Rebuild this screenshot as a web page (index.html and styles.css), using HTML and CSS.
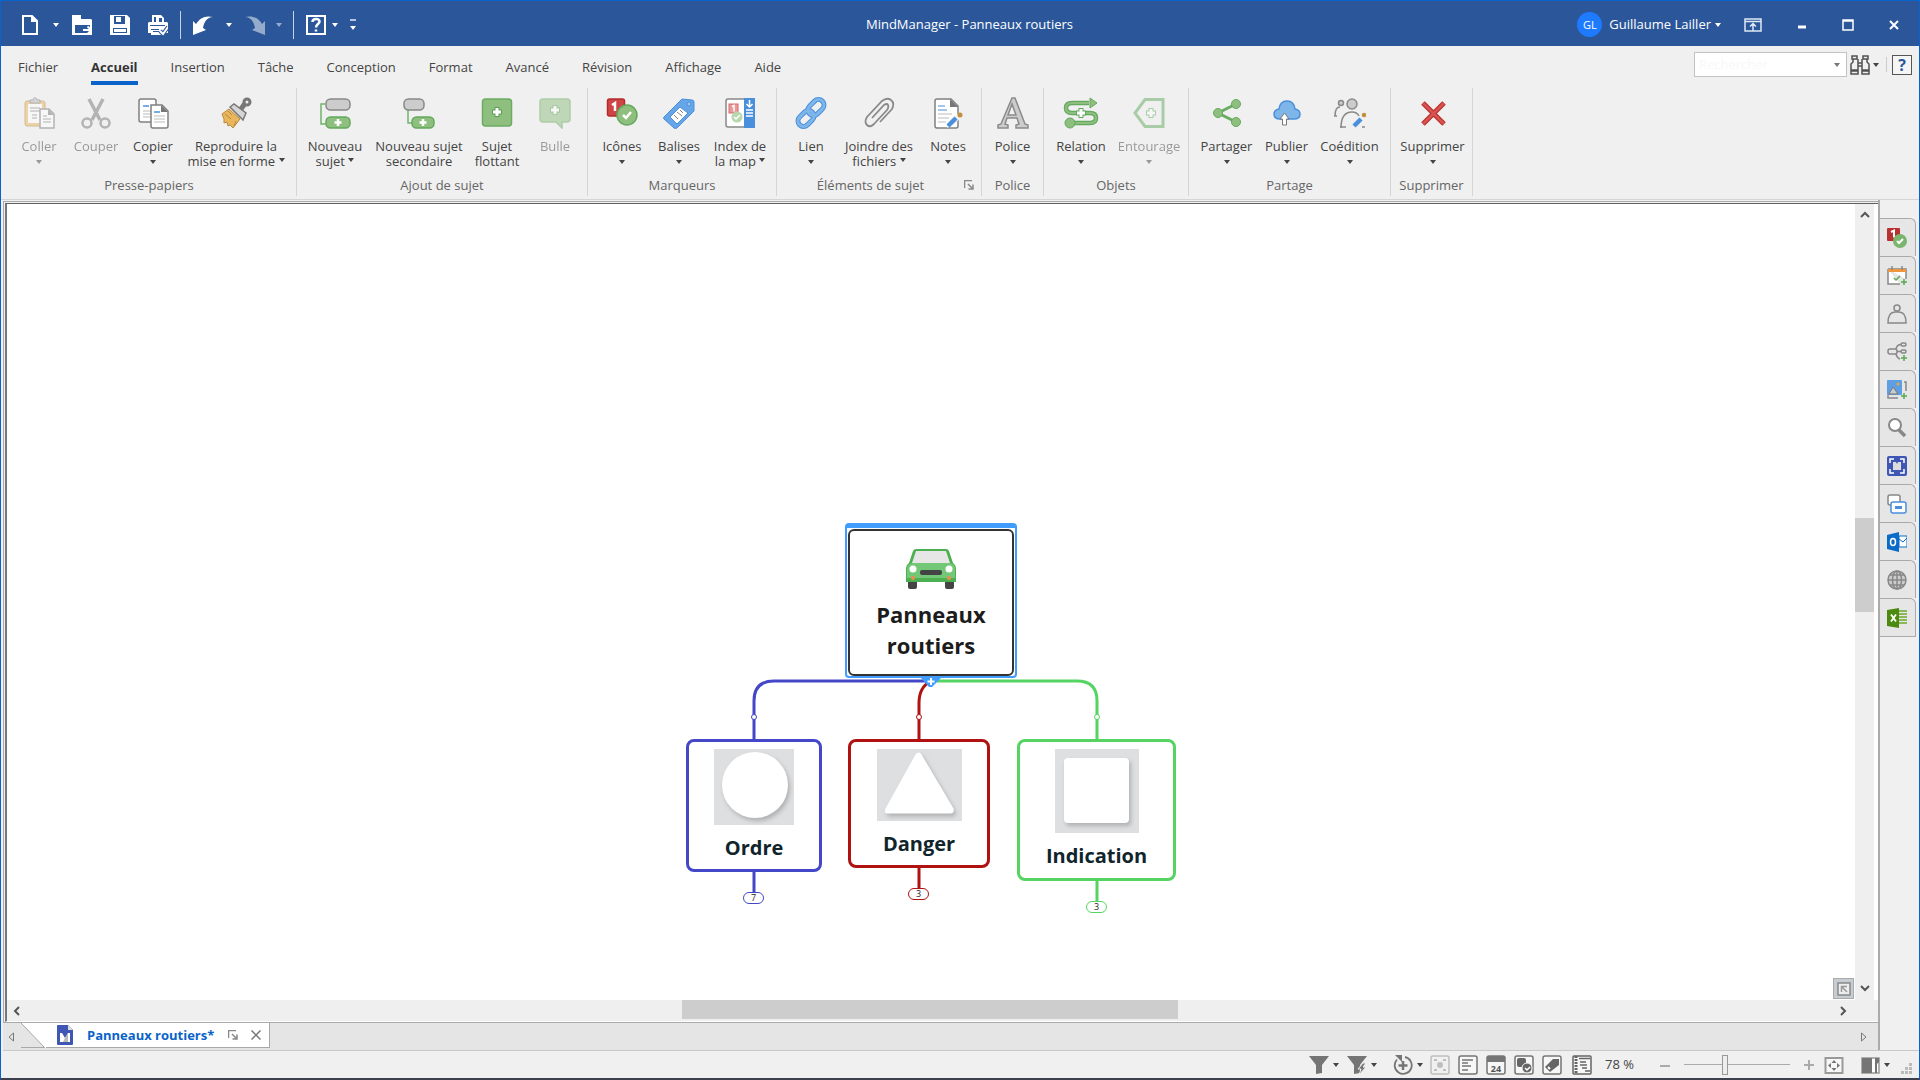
FILE: index.html
```html
<!DOCTYPE html>
<html lang="fr">
<head>
<meta charset="utf-8">
<title>MindManager - Panneaux routiers</title>
<link rel="stylesheet" href="styles.css">
</head>
<body>
<div class="window">
<header class="titlebar">
  <div class="quick">
    <button class="qbtn" aria-label="Nouveau"><svg width="20" height="22" viewBox="0 0 20 22"><path d="M3 2h9l5 5v13H3z" fill="none" stroke="#fff" stroke-width="2"/><path d="M11 1v7h7z" fill="#fff"/></svg></button>
    <button class="drop" aria-label="Options de nouveau"><i class="caret"></i></button>
    <button class="qbtn" aria-label="Ouvrir"><svg width="20" height="22" viewBox="0 0 20 22"><path d="M0 1h9v4h10l1 1v15H0z" fill="#fff"/><path d="M3 11h15v8H3z" fill="#2b579a"/><path d="M11 16h8M15.500 12.500l4 3.500-4 4" fill="none" stroke="#fff" stroke-width="2"/></svg></button>
    <button class="qbtn" aria-label="Enregistrer"><svg width="20" height="22" viewBox="0 0 20 22"><path d="M0 1h17l3 3v17H0z" fill="#fff"/><path d="M4 2h11v8H4zM3 14h14v5H3z" fill="#2b579a"/><path d="M6 3h5v5H6zM4 15h12v4H4z" fill="#fff"/><path d="M4 18.500h12" stroke="#2b579a"/></svg></button>
    <button class="qbtn" aria-label="Imprimer"><svg width="20" height="22" viewBox="0 0 20 22"><path d="M4 8V1h9l3 3v4h3l1 1v10H0V9l1-1z" fill="#fff"/><path d="M6 3h2v5H6zM11 4h3v4h-3zM2 11h15v1H2zM3 15h8v1H3zM5 18h6v1H5z" fill="#2b579a"/><path d="M3 16h11v5H3z" fill="#fff"/><path d="M5 17.500h6" stroke="#2b579a"/><path d="M12 17l3 3 5-7" fill="none" stroke="#2b579a" stroke-width="4"/><path d="M12 17l3 3 5-7" fill="none" stroke="#fff" stroke-width="2"/></svg></button>
    <span class="qsep"></span>
    <button class="qbtn" aria-label="Annuler"><svg width="20" height="22" viewBox="0 0 20 22"><path d="M0 7l3 3C7 4 12 1 20 3c-6 0-9 5-10 11l3 2-13 5z" fill="#fff"/></svg></button>
    <button class="drop" aria-label="Historique d'annulation"><i class="caret"></i></button>
    <button class="qbtn dim" aria-label="Rétablir"><svg width="20" height="22" viewBox="0 0 20 22"><path d="M20 7l-3 3C13 4 8 1 0 3c6 0 9 5 10 11l-3 2 13 5z" fill="#fff"/></svg></button>
    <button class="drop dim" aria-label="Historique de rétablissement"><i class="caret"></i></button>
    <span class="qsep"></span>
    <button class="qbtn" aria-label="Aide"><svg width="20" height="22" viewBox="0 0 20 22"><rect x="1" y="2" width="18" height="18" fill="none" stroke="#fff" stroke-width="2"/><path d="M6.500 8c0-4 7-4 7-.5 0 2.500-3.500 2.500-3.500 6M10 15.500v2" fill="none" stroke="#fff" stroke-width="2.500"/></svg></button>
    <button class="drop tight" aria-label="Options d'aide"><i class="caret"></i></button>
    <button class="drop tight" aria-label="Personnaliser la barre"><span class="custom"><i class="caret"></i></span></button>
  </div>
  <h1 class="title">MindManager - Panneaux routiers</h1>
  <div class="account">
    <span class="avatar">GL</span>
    <button class="user">Guillaume Lailler <i class="caret"></i></button>
    <button class="wbtn" aria-label="Options du ruban"><svg width="18" height="14" viewBox="0 0 18 14"><path d="M1 1h16v12H1zM1 3.500h16M9 13V6M6 8.500l3-3 3 3" fill="none" stroke="#dfe7f3" stroke-width="1.500"/></svg></button>
    <button class="wbtn" aria-label="Réduire"><svg width="12" height="12" viewBox="0 0 12 12"><path d="M2 8h8" stroke="#fff" stroke-width="3"/></svg></button>
    <button class="wbtn" aria-label="Agrandir"><svg width="12" height="12" viewBox="0 0 12 12"><path d="M1 1h10v10H1zM1 2h10" fill="none" stroke="#fff" stroke-width="1.500"/></svg></button>
    <button class="wbtn" aria-label="Fermer"><svg width="12" height="12" viewBox="0 0 12 12"><path d="M2 2l8 8M10 2l-8 8" stroke="#fff" stroke-width="2"/></svg></button>
  </div>
</header>

<div class="tabrow">
  <nav class="tabs">
    <a href="#">Fichier</a><a href="#" class="on">Accueil</a><a href="#">Insertion</a><a href="#">Tâche</a><a href="#">Conception</a><a href="#">Format</a><a href="#">Avancé</a><a href="#">Révision</a><a href="#">Affichage</a><a href="#">Aide</a>
  </nav>
  <div class="search">
    <div class="combo"><input type="text" placeholder="Rechercher" aria-label="Rechercher"><button aria-label="Recherches récentes"><i class="caret"></i></button></div>
    <button class="find" aria-label="Lancer la recherche"><svg width="20" height="20" viewBox="0 0 20 20" fill="none" stroke="#505050" stroke-width="1.500"><path d="M2 1h5v3H2zM13 1h5v3h-5zM3 4v3L1 9v6h7V4M17 4v3l2 2v6h-7V4M8 8h4M8 11h4M1 16h7v3H1zM12 16h7v3h-7z"/></svg><i class="caret"></i></button>
    <span class="ssep"></span>
    <button class="help" aria-label="Aide">?</button>
  </div>
</div>

<div class="ribbon">
  <section class="group g1">
    <div class="items">
      <button class="rb w58 off"><svg viewBox="0 0 32 32"><rect x="2" y="4" width="20" height="25" rx="2" fill="#e9b65e" stroke="#b98a3c"/><rect x="5" y="7" width="14" height="19" fill="#fff"/><path d="M7 6V3h3c0-3 4-3 4 0h3v3z" fill="#bbb" stroke="#777"/><path d="M7 11h10M7 14h10M9 18h5M9 21h5" stroke="#777"/><path d="M17 12h9l5 5v14H17z" fill="#fff" stroke="#777" stroke-width="1.500"/><path d="M25 12v6h6z" fill="#777"/><path d="M20 19h4M20 22h8M20 25h8" stroke="#777"/></svg><span>Coller</span><i class="caret"></i></button>
      <button class="rb w56 off"><svg viewBox="0 0 32 32" fill="none" stroke="#777"><path d="M9 2l11 21M23 2L12 23" stroke-width="3.500"/><circle cx="7" cy="26" r="4.500" stroke-width="2.500"/><circle cx="25" cy="26" r="4.500" stroke-width="2.500"/></svg><span>Couper</span></button>
      <button class="rb w58"><svg viewBox="0 0 32 32"><rect x="2" y="2" width="17" height="23" rx="2" fill="#fff" stroke="#808080" stroke-width="1.500"/><path d="M6 9h6" stroke="#4a8fdc" stroke-width="1.500"/><path d="M6 14h8M6 17h8M6 20h8" stroke="#bbb"/><path d="M14 8h11l6 6v15q0 2-2 2H16q-2 0-2-2z" fill="#fff" stroke="#808080" stroke-width="1.500"/><path d="M24 8v7h7z" fill="#777"/><path d="M17 15h6" stroke="#4a8fdc" stroke-width="1.500"/><path d="M17 19h11M17 22h11M17 25h11" stroke="#bbb"/></svg><span>Copier</span><i class="caret"></i></button>
      <button class="rb w108"><svg viewBox="0 0 32 32"><path d="M21 12l5-7" stroke="#777" stroke-width="5"/><circle cx="27" cy="5" r="3" fill="#f0f0f0" stroke="#777" stroke-width="3"/><path d="M2 17l7-5 11 10-7 9-3-3-2 1-1-4-3 1 0-4z" fill="#e9b65e" stroke="#b98a3c"/><path d="M8 14l4 4M5 17l6 5M14 29l2-5" stroke="#b98a3c"/><path d="M10 10l4-3 12 9-3 7z" fill="#d5d5d5" stroke="#777" stroke-width="1.500"/></svg><span>Reproduire la<br>mise en forme <i class="caret"></i></span></button>
    </div>
    <h2>Presse-papiers</h2>
  </section>
  <section class="group g2">
    <div class="items">
      <button class="rb w68"><svg viewBox="0 0 32 32"><path d="M6 7H2v20h5" fill="none" stroke="#6fb46a" stroke-width="1.500"/><rect x="7" y="2" width="24" height="11" rx="4.500" fill="#ccc" stroke="#888" stroke-width="1.500"/><rect x="7" y="20" width="24" height="11" rx="4.500" fill="#8fbf7f" stroke="#63a95e" stroke-width="1.500"/><path d="M19 22v7M15.500 25.500h7" stroke="#fff" stroke-width="2.500"/></svg><span>Nouveau<br>sujet <i class="caret"></i></span></button>
      <button class="rb w100"><svg viewBox="0 0 32 32"><path d="M5 13v13h6" fill="none" stroke="#6fb46a" stroke-width="1.500"/><rect x="1" y="2" width="20" height="11" rx="4.500" fill="#ccc" stroke="#888" stroke-width="1.500"/><rect x="9" y="20" width="22" height="11" rx="4.500" fill="#8fbf7f" stroke="#63a95e" stroke-width="1.500"/><path d="M20 22v7M16.500 25.500h7" stroke="#fff" stroke-width="2.500"/></svg><span>Nouveau sujet<br>secondaire</span></button>
      <button class="rb w56"><svg viewBox="0 0 32 32"><rect x="1.500" y="2" width="29" height="27" rx="3" fill="#8fbf7f" stroke="#6bac62" stroke-width="1.500"/><path d="M16 10v10M11 15h10" stroke="#5e9f58" stroke-width="5"/><path d="M16 11v8M12 15h8" stroke="#fff" stroke-width="3"/></svg><span>Sujet<br>flottant</span></button>
      <button class="rb w60 off"><svg viewBox="0 0 32 32"><path d="M4 2h24q3 0 3 3v17q0 3-3 3h-5v6l-6-6H4q-3 0-3-3V5q0-3 3-3z" fill="#8fbf7f" stroke="#6bac62" stroke-width="1.500"/><path d="M16 8v10M11 13h10" stroke="#5e9f58" stroke-width="5"/><path d="M16 9v8M12 13h8" stroke="#fff" stroke-width="3"/></svg><span>Bulle</span></button>
    </div>
    <h2>Ajout de sujet</h2>
  </section>
  <section class="group g3">
    <div class="items">
      <button class="rb w56"><svg viewBox="0 0 32 32"><rect x="1.500" y="2" width="17" height="17" rx="2" fill="#cf4444" stroke="#b32c2c" stroke-width="1.500"/><path d="M6 8l3-2v8" fill="none" stroke="#fff" stroke-width="2.500"/><circle cx="21" cy="18" r="10" fill="#8fbf7f" stroke="#63a95e" stroke-width="1.500"/><path d="M17 18l3 3 5-6" fill="none" stroke="#fff" stroke-width="2.500"/></svg><span>Icônes</span><i class="caret"></i></button>
      <button class="rb w58"><svg viewBox="0 0 32 32"><path d="M1 20L19 2l10 1q2 0 2 2l0 9L14 31q-2 1-3 0L1 22q-1-1 0-2z" fill="#66a6e8" stroke="#4a8fdc"/><path d="M7 20l10-10 8 6-11 11z" fill="#fff" stroke="#4a8fdc"/><path d="M11 18l4 4M14 15l5 4M17 13l3 3" stroke="#888"/><circle cx="26" cy="7" r="2" fill="#9cc8f2" stroke="#4a8fdc"/></svg><span>Balises</span><i class="caret"></i></button>
      <button class="rb w64"><svg viewBox="0 0 32 32"><rect x="2" y="2" width="20" height="28" rx="2" fill="#fff" stroke="#888" stroke-width="1.500"/><path d="M20 1h11v30H20z" fill="#4a8fdc"/><path d="M25.500 3v6M22.500 7l3 3 3-3M22 13h7M22 16h7M22 19h7" fill="none" stroke="#fff" stroke-width="1.500"/><rect x="5" y="7" width="9" height="9" fill="#e99a9a" stroke="#d66"/><path d="M8 9.500l2-1v6" fill="none" stroke="#fff" stroke-width="1.500"/><circle cx="13" cy="20" r="5.500" fill="#b7d6ad"/><path d="M10 20l2 2 4-4" fill="none" stroke="#fff" stroke-width="1.500"/></svg><span>Index de<br>la map <i class="caret"></i></span></button>
    </div>
    <h2>Marqueurs</h2>
  </section>
  <section class="group g4">
    <div class="items">
      <button class="rb w52"><svg viewBox="0 0 32 32"><g fill="none" stroke="#4a8fdc" stroke-width="5"><rect x="12" y="5" width="18" height="11" rx="5.500" transform="rotate(-45 21 10.500)"/><rect x="2" y="16" width="18" height="11" rx="5.500" transform="rotate(-45 11 21.500)"/></g><g fill="none" stroke="#7fb6ea" stroke-width="3"><rect x="12" y="5" width="18" height="11" rx="5.500" transform="rotate(-45 21 10.500)"/><rect x="2" y="16" width="18" height="11" rx="5.500" transform="rotate(-45 11 21.500)"/></g></svg><span>Lien</span><i class="caret"></i></button>
      <button class="rb w84"><svg viewBox="0 0 32 32" fill="none" stroke="#8a8a8a" stroke-width="1.800"><path d="M9 21L21 8q3-2 4 0t-1 5L11 27q-4 4-7 1t0-8L19 4q5-4 9-1t1 9L17 25"/></svg><span>Joindre des<br>fichiers <i class="caret"></i></span></button>
      <button class="rb w54"><svg viewBox="0 0 32 32"><path d="M5 2h14l7 7v20q0 2-2 2H5q-2 0-2-2V4q0-2 2-2z" fill="#fff" stroke="#808080" stroke-width="1.500"/><path d="M18 2v8h8z" fill="#777"/><path d="M6 9h7M6 13h9" stroke="#4a8fdc"/><path d="M6 17h14M6 21h11M6 25h8" stroke="#bbb"/><path d="M15 31l2-7 11-9 3 4-10 9z" fill="#f0f0f0"/><path d="M16 29l8-8" stroke="#4a8fdc" stroke-width="4.500"/><circle cx="28" cy="18" r="2.500" fill="#c0903c"/></svg><span>Notes</span><i class="caret"></i></button>
    </div>
    <div class="foot"><h2>Éléments de sujet</h2><button class="launch" aria-label="Plus d'options"><svg width="10" height="10" viewBox="0 0 10 10"><path d="M.5 8V.500H8M4 4l4 4M9 4.500V9H4.500" fill="none" stroke="#888" stroke-width="1.500"/></svg></button></div>
  </section>
  <section class="group g5">
    <div class="items">
      <button class="rb w60"><svg viewBox="0 0 32 32"><path d="M15 1h3l10 26 3 1v3H19v-3l3-1-2-6H10l-2 6 3 1v3H1v-3l3-1zM15 7l-4 11h8z" fill="#ccc" stroke="#8a8a8a" stroke-width="1.500"/></svg><span>Police</span><i class="caret"></i></button>
    </div>
    <h2>Police</h2>
  </section>
  <section class="group g6">
    <div class="items">
      <button class="rb w66"><svg viewBox="0 0 36 32"><path d="M26 6H9q-6 0-6 5t6 5h18q6 0 6 5t-6 5H8" fill="none" stroke="#63a95e" stroke-width="4.500"/><path d="M26 6H9q-6 0-6 5t6 5h18q6 0 6 5t-6 5H8" fill="none" stroke="#8fbf7f" stroke-width="2"/><path d="M27 1l7 5-7 5z" fill="#8fbf7f" stroke="#63a95e"/><circle cx="7" cy="26" r="5" fill="#8fbf7f" stroke="#63a95e"/><path d="M18 11v10M13 16h10" stroke="#63a95e" stroke-width="5"/><path d="M18 12v8M14 16h8" stroke="#fff" stroke-width="3"/></svg><span>Relation</span><i class="caret"></i></button>
      <button class="rb w70 off"><svg viewBox="0 0 32 32"><path d="M12 2.500h18v27H12L2 16z" fill="none" stroke="#63a95e" stroke-width="3"/><path d="M18 11v10M13 16h10" stroke="#63a95e" stroke-width="5"/><path d="M18 12v8M14 16h8" stroke="#fff" stroke-width="3"/></svg><span>Entourage</span><i class="caret"></i></button>
    </div>
    <h2>Objets</h2>
  </section>
  <section class="group g7">
    <div class="items">
      <button class="rb w60"><svg viewBox="0 0 32 32"><path d="M25 7L7 16l18 9" fill="none" stroke="#6bac62" stroke-width="3"/><g fill="#8fbf7f" stroke="#63a95e"><circle cx="25" cy="7" r="4.500"/><circle cx="7" cy="16" r="4.500"/><circle cx="25" cy="25" r="4.500"/></g></svg><span>Partager</span><i class="caret"></i></button>
      <button class="rb w60"><svg viewBox="0 0 32 32"><path d="M9 22q-6 0-6-5 0-4 5-5 1-8 8-8t8 8q5 1 5 5 0 5-6 5z" fill="#7fb6ea" stroke="#4a8fdc" stroke-width="1.500"/><path d="M11.500 28v-6H9l4.500-6 4.500 6h-2.500v6z" fill="#fff" stroke="#777"/></svg><span>Publier</span><i class="caret"></i></button>
      <button class="rb w66"><svg viewBox="0 0 32 32" fill="none" stroke="#8a8a8a" stroke-width="1.500"><circle cx="7" cy="6" r="2.500" fill="#ccc"/><path d="M1 19q0-9 5-9M0 19h3"/><circle cx="18" cy="7" r="5" fill="#ccc"/><path d="M7 31q0-16 11-16 5 0 7 4M6 30h6"/><path d="M20 29l7-7" stroke="#4a8fdc" stroke-width="4.500"/><circle cx="30" cy="18" r="1.500" stroke="#c0903c" fill="#c0903c"/><path d="M28 30h3"/></svg><span>Coédition</span><i class="caret"></i></button>
    </div>
    <h2>Partage</h2>
  </section>
  <section class="group g8">
    <div class="items">
      <button class="rb w78"><svg viewBox="0 0 32 32"><path d="M6 6l21 21M27 6L6 27" stroke="#b83030" stroke-width="5"/><path d="M6 6l21 21M27 6L6 27" stroke="#d9534f" stroke-width="2.500"/></svg><span>Supprimer</span><i class="caret"></i></button>
    </div>
    <h2>Supprimer</h2>
  </section>
</div>

<div class="work">
  <main class="doc">
    <div class="frame">
      <div class="view">
        <div class="canvas">
          <div class="map">
            <svg class="links" width="490" height="400" viewBox="0 0 490 400" fill="none" stroke-width="3">
              <g stroke="#4448c8"><path d="M245 158H88q-20 0-20 20v38M68 345v25"/></g>
              <g stroke="#55d463"><path d="M245 158h146q20 0 20 20v38M411 350v28"/></g>
              <g stroke="#b01212"><path d="M245 158q-12 6-12 22v36M233 340v25"/></g>
              <g fill="#fff" stroke-width="1"><circle cx="68" cy="194" r="2.500" stroke="#4448c8"/><circle cx="233" cy="194" r="2.500" stroke="#b01212"/><circle cx="411" cy="194" r="2.500" stroke="#55d463"/></g>
            </svg>
            <div class="root"><div class="rootbox">
              <svg width="52" height="42" viewBox="0 0 52 42"><path d="M3 33h9v6q0 2-2 2H5q-2 0-2-2zM40 33h9v6q0 2-2 2h-5q-2 0-2-2z" fill="#444"/><path d="M11 1h30q2 0 3 2l4 12q3 2 3 6v13H1V21q0-4 3-6L8 3q1-2 3-2z" fill="#4caf50"/><path d="M11 3h30l4 12H7z" fill="#e6e6e6"/><path d="M7 15h38q5 1 5 6v9H2v-9q0-5 5-6z" fill="#73c877"/><circle cx="8" cy="21" r="3.500" fill="#fff"/><circle cx="44" cy="21" r="3.500" fill="#fff"/><rect x="15" y="22" width="22" height="5" rx="2" fill="#444"/><circle cx="8" cy="30" r="2" fill="#f58a4c"/><circle cx="44" cy="30" r="2" fill="#f58a4c"/></svg>
              <strong>Panneaux<br>routiers</strong></div>
            </div>
            <svg class="plus" width="22" height="11" viewBox="0 0 22 11"><path d="M0 0h22L12 10h-3z" fill="#409cff"/><path d="M11 1v7M7.500 4.500h7" stroke="#fff" stroke-width="2"/></svg>
            <div class="node ordre"><svg width="80" height="76" viewBox="0 0 80 76"><path d="M0 0h80v76H0z" fill="#dedfe1"/><circle class="sign" cx="41" cy="36" r="33"/></svg><strong>Ordre</strong></div>
            <div class="node danger"><svg width="85" height="72" viewBox="0 0 85 72"><path d="M0 0h85v72H0z" fill="#dedfe1"/><path class="sign" d="M38.500 5.500q3-4 6 0l32 54q1 5-3 5h-63q-4 0-2-5z"/></svg><strong>Danger</strong></div>
            <div class="node indic"><svg width="84" height="84" viewBox="0 0 84 84"><path d="M0 0h84v84H0z" fill="#dedfe1"/><rect class="sign" x="9" y="9" width="65" height="65" rx="4"/></svg><strong>Indication</strong></div>
            <button class="pill p1"><span>7</span></button><button class="pill p2"><span>3</span></button><button class="pill p3"><span>3</span></button>
          </div>
          <button class="corner" aria-label="Vue d'ensemble"><svg width="14" height="14" viewBox="0 0 14 14"><path d="M1 1h12v12H1z" fill="#eee" stroke="#888" stroke-width="1.500"/><path d="M4.500 10V4.500H10M5 5l5 5" fill="none" stroke="#999" stroke-width="1.500"/></svg></button>
        </div>
        <div class="vbar">
          <svg width="12" height="12" viewBox="0 0 12 12"><path d="M2 8l4-4 4 4" fill="none" stroke="#555" stroke-width="2"/></svg>
          <div class="vtrack"><div class="vthumb"></div></div>
          <svg width="12" height="12" viewBox="0 0 12 12"><path d="M2 4l4 4 4-4" fill="none" stroke="#555" stroke-width="2"/></svg>
        </div>
      </div>
      <div class="hbar">
        <svg width="12" height="12" viewBox="0 0 12 12"><path d="M8 2L4 6l4 4" fill="none" stroke="#555" stroke-width="2"/></svg>
        <div class="htrack"><div class="hthumb"></div></div>
        <svg width="12" height="12" viewBox="0 0 12 12"><path d="M4 2l4 4-4 4" fill="none" stroke="#555" stroke-width="2"/></svg>
      </div>
    </div>
    <div class="doctabs">
      <button class="nav" aria-label="Onglet précédent"><svg width="8" height="10" viewBox="0 0 8 10"><path d="M6.500 1v8L2 5z" fill="none" stroke="#777"/></svg></button>
      <div class="dtab">
        <svg class="slant" width="25" height="26" viewBox="0 0 25 26"><path d="M0 0l24 25h1V0z" fill="#fff"/><path d="M0 0l24 25" stroke="#a8a8a8" fill="none"/></svg>
        <svg width="16" height="20" viewBox="0 0 16 20"><path d="M0 1q0-1 1-1h10l5 5v14q0 1-1 1H1q-1 0-1-1z" fill="#3f56b5"/><path d="M11 0v5h5z" fill="#ddd"/><path d="M3 8h2l3 5 3-5h2v9H3z" fill="#fff"/><path d="M8 13l3-5v9H6z" fill="#b9b9b9"/></svg>
        <a href="#">Panneaux routiers*</a>
        <button class="tico" aria-label="Détacher"><svg width="10" height="10" viewBox="0 0 10 10"><path d="M.5 8V.500H8M4 4l4 4M9 4.500V9H4.500" fill="none" stroke="#888" stroke-width="1.500"/></svg></button>
        <button class="tico" aria-label="Fermer"><svg width="10" height="10" viewBox="0 0 10 10"><path d="M.5 .5l9 9M9.500 .5l-9 9" stroke="#777" stroke-width="1.500"/></svg></button>
      </div>
      <button class="nav end" aria-label="Onglet suivant"><svg width="8" height="10" viewBox="0 0 8 10"><path d="M1.500 1v8L6 5z" fill="none" stroke="#777"/></svg></button>
    </div>
  </main>
  <aside class="side">
    <button aria-label="Marqueurs"><svg viewBox="0 0 20 20"><rect width="13" height="13" rx="1" fill="#b83030"/><path d="M4 4l3-1.500v7" fill="none" stroke="#fff" stroke-width="2"/><circle cx="13" cy="13" r="7" fill="#7ab56e"/><path d="M10 13l2 2 4-4" fill="none" stroke="#fff" stroke-width="2"/></svg></button>
    <button aria-label="Tâches"><svg viewBox="0 0 20 20"><path d="M1 3h18v10M13 18H1V3" fill="#fff" stroke="#888" stroke-width="1.500"/><path d="M1 3h18v3H1z" fill="#f0963c"/><path d="M5 0v4M15 0v4" stroke="#888" stroke-width="1.500"/><path d="M7 12l2 2 4-4M17 13v6M14 16h6" fill="none" stroke="#5aa852" stroke-width="1.500"/></svg></button>
    <button aria-label="Ressources"><svg viewBox="0 0 20 20" fill="none" stroke="#888" stroke-width="1.500"><circle cx="10" cy="4" r="3"/><path d="M1 19q0-11 7-11h4q7 0 7 11z"/></svg></button>
    <button aria-label="Parties de map"><svg viewBox="0 0 20 20" fill="none" stroke="#888" stroke-width="1.500"><rect x="1" y="7" width="9" height="5" rx="2"/><path d="M10 9.500h4M9 7q1-4.500 5-4.500M9 12q1 4 4 5"/><rect x="14" y="1" width="5" height="3" rx="1.500"/><rect x="14" y="8" width="5" height="3" rx="1.500"/><path d="M17 13v6M14 16h6" stroke="#5aa852"/></svg></button>
    <button aria-label="Bibliothèque"><svg viewBox="0 0 20 20"><path d="M1 15v3h10M17 2h2v9" fill="none" stroke="#888" stroke-width="1.500"/><rect x="0" y="0" width="15" height="15" rx="1" fill="#5d9fe2"/><path d="M2 14l4-7 5 7z" fill="#ccc" stroke="#777"/><circle cx="11" cy="4" r="1.500" fill="#e5a93c"/><path d="M17 13v6M14 16h6" stroke="#5aa852" stroke-width="1.500"/></svg></button>
    <button aria-label="Rechercher"><svg viewBox="0 0 20 20"><circle cx="8" cy="7" r="6" fill="#fff" stroke="#888" stroke-width="2"/><path d="M12 12l6 6" stroke="#888" stroke-width="3.500"/></svg></button>
    <button aria-label="Capture"><svg viewBox="0 0 20 20"><rect width="20" height="20" rx="2" fill="#3f56b5"/><path d="M3 7V3h4M13 3h4v4M17 13v4h-4M7 17H3v-4" fill="none" stroke="#fff" stroke-width="1.500"/><path d="M6 6h3l1 2 1-2h3v8H6z" fill="#ddd"/></svg></button>
    <button aria-label="Fenêtres"><svg viewBox="0 0 20 20"><rect x="1" y="1" width="12" height="10" rx="2" fill="#fff" stroke="#888" stroke-width="1.500"/><rect x="4" y="8" width="15" height="11" rx="2" fill="#fff" stroke="#4a8fdc" stroke-width="1.500"/><path d="M8 13.500h7" stroke="#4a8fdc" stroke-width="3"/></svg></button>
    <button aria-label="Outlook"><svg viewBox="0 0 20 20"><path d="M12 4h8v11h-8z" fill="#fff" stroke="#0a6cc8"/><path d="M12 7l4 3 4-4" fill="none" stroke="#0a6cc8"/><path d="M0 3l12-3v20L0 17z" fill="#0a6cc8"/><ellipse cx="6" cy="10" rx="2.500" ry="3.500" fill="none" stroke="#fff" stroke-width="1.500"/></svg></button>
    <button aria-label="Web"><svg viewBox="0 0 20 20" fill="#ccc" stroke="#888" stroke-width="1.500"><circle cx="10" cy="10" r="9"/><path d="M10 1v18M1 10h18M3 5h14M3 15h14"/><ellipse cx="10" cy="10" rx="4.500" ry="9" fill="none"/></svg></button>
    <button aria-label="Excel"><svg viewBox="0 0 20 20"><path d="M12 3h8M12 6h8M12 9h8M12 12h8M12 15h8" stroke="#8db85a" stroke-width="2"/><path d="M0 2l12-2v20L0 18z" fill="#4c8a10"/><path d="M4 6.500l5 7M9 6.500l-5 7" stroke="#fff" stroke-width="1.800"/></svg></button>
  </aside>
</div>

<footer class="status">
  <button class="sb" aria-label="Filtre"><svg viewBox="0 0 20 20"><path d="M0 1h20l-7 9v8l-6 1v-9z" fill="#757575"/></svg></button><i class="caret"></i>
  <button class="sb g10" aria-label="Filtre rapide"><svg viewBox="0 0 20 20"><path d="M0 1h20l-7 9v8l-6 1v-9z" fill="#757575"/><path d="M16 8l-5 6h3l-2 6 7-8h-3l3-4z" fill="#757575" stroke="#f0f0f0"/></svg></button><i class="caret"></i>
  <button class="sb g15" aria-label="Détail"><svg viewBox="0 0 20 20" fill="none" stroke="#757575"><path d="M12 2a8.500 8.500 0 1 1-8 2.500" stroke-width="1.800"/><path d="M2 0h7v7z" fill="#757575" stroke="none"/><path d="M10 6v9M5.500 10.500h9" stroke-width="2.500"/></svg></button><i class="caret"></i>
  <button class="sb pale" aria-label="Map"><svg viewBox="0 0 20 20"><rect x="1" y="1" width="18" height="18" rx="2" fill="none" stroke="#757575" stroke-width="1.500"/><circle cx="10" cy="10" r="3" fill="#757575"/><path d="M4 5h3M13 5h3M4 15h3M13 15h3" stroke="#757575" stroke-width="2"/></svg></button>
  <button class="sb g8s" aria-label="Plan"><svg viewBox="0 0 20 20"><rect x="1" y="1" width="18" height="18" rx="2" fill="#f7f7f7" stroke="#757575" stroke-width="1.500"/><path d="M4 5h11M4 8h6M4 11h9M4 15h6" stroke="#757575" stroke-width="1.500"/></svg></button>
  <button class="sb g8s" aria-label="Calendrier"><svg viewBox="0 0 20 20"><rect x="1" y="1" width="18" height="18" rx="2" fill="#f7f7f7" stroke="#757575" stroke-width="1.500"/><path d="M1 1h18v6H1z" fill="#757575"/><text x="10" y="17" text-anchor="middle" class="cal">24</text></svg></button>
  <button class="sb g8s" aria-label="Icônes"><svg viewBox="0 0 20 20"><rect x="1" y="1" width="18" height="18" rx="2" fill="#f7f7f7" stroke="#757575" stroke-width="1.500"/><rect x="3" y="3" width="9" height="9" rx="2" fill="#666"/><circle cx="13" cy="13" r="5" fill="#666" stroke="#f7f7f7"/><path d="M11 13l2 2 3-3" fill="none" stroke="#fff" stroke-width="1.500"/></svg></button>
  <button class="sb g8s" aria-label="Balises"><svg viewBox="0 0 20 20"><rect x="1" y="1" width="18" height="18" rx="2" fill="#f7f7f7" stroke="#757575" stroke-width="1.500"/><path d="M3 12l8-8h6v6l-9 7z" fill="#666"/><path d="M6 12l2 2" stroke="#fff" stroke-width="2"/></svg></button>
  <button class="sb g10s" aria-label="Gantt"><svg viewBox="0 0 20 20"><rect x="1" y="1" width="18" height="18" rx="1" fill="#f7f7f7" stroke="#666" stroke-width="1.500"/><path d="M4 1v18" stroke="#666" stroke-width="3" stroke-dasharray="2 1"/><path d="M7 3.500h11M8 7h6M8 10h7M10 13h5M13 16h5" stroke="#666" stroke-width="1.500"/></svg></button>
  <output class="zoom">78 %</output>
  <button class="zb" aria-label="Zoom arrière"><svg width="10" height="10" viewBox="0 0 10 10"><path d="M0 6h10" stroke="#aaa" stroke-width="2"/></svg></button>
  <input class="range" type="range" min="0" max="100" value="38" aria-label="Zoom">
  <button class="zb" aria-label="Zoom avant"><svg width="10" height="10" viewBox="0 0 10 10"><path d="M0 5h10M5 0v10" stroke="#aaa" stroke-width="2"/></svg></button>
  <button class="sb fit" aria-label="Ajuster"><svg viewBox="0 0 20 20"><rect x="1.500" y="3" width="17" height="15" fill="#f7f7f7" stroke="#999" stroke-width="2"/><path d="M10 5l2.500 3h-5zM10 16l2.500-3h-5zM4 10.500l3-2.500v5zM16 10.500l-3-2.500v5z" fill="#757575"/></svg></button>
  <button class="sb fit" aria-label="Volets"><svg viewBox="0 0 20 20"><path d="M2 3h17v15H2z" fill="#fff" stroke="#999" stroke-width="1.500"/><path d="M2 3h10v15H2z" fill="#757575"/><path d="M15 3h4v4l-2 2v9h-2z" fill="#757575"/></svg></button><i class="caret"></i>
  <svg class="grip" width="12" height="12" viewBox="0 0 12 12" fill="#bbb"><path d="M0 9h3v3H0zM4 9h3v3H4zM8 9h3v3H8zM4 5h3v3H4zM8 5h3v3H8zM8 1h3v3H8z"/></svg>
</footer>
</div>
</body>
</html>
```
FILE: styles.css
```css
* { box-sizing: border-box; }
body { margin: 0; background: #f0f0f0; font: 13px/15px "Open Sans", "Noto Sans", sans-serif; color: #444; }
button { border: 0; padding: 0; margin: 0; background: none; font: inherit; color: inherit; }
button svg { display: block; }
a { color: inherit; text-decoration: none; }
h1, h2 { margin: 0; font-size: 13px; font-weight: 400; }
.window { display: flex; flex-direction: column; min-height: 100vh; border: 1px solid #0a63c9; border-bottom: 2px solid #3c3f4c; }
.caret { display: inline-block; flex: none; border: 3px solid transparent; border-top: 4px solid currentColor; border-bottom: 0; }

.titlebar { display: grid; grid-template-columns: 1fr auto 1fr; align-items: center; height: 45px; padding: 2px 0 0 19px; background: #2b579a; color: #fff; }
.quick { display: flex; align-items: center; }
.qbtn { width: 20px; margin-right: 18px; }
.qbtn:has(+ .drop) { margin-right: 0; }
.qbtn:has(+ .qsep) { margin-right: 12px; }
.drop { display: flex; justify-content: center; width: 32px; }
.drop.tight { width: 18px; }
.drop:has(+ .qsep) { width: 28px; }
.quick .dim { opacity: .5; }
.qsep { width: 1px; height: 28px; margin-right: 12px; background: #c6d2e6; }
.custom { border-top: 2px solid #b7c5de; padding-top: 2px; line-height: 4px; }
.account { display: flex; align-items: center; justify-content: flex-end; padding-right: 19px; }
.avatar { width: 25px; height: 25px; margin-right: 7px; border-radius: 50%; background: #1e7bff; font-size: 11px; line-height: 25px; text-align: center; }
.user { display: flex; align-items: center; gap: 4px; margin-right: 23px; }
.wbtn { margin-right: 34px; }
.wbtn:last-child { margin-right: 0; }

.tabrow { display: flex; justify-content: space-between; height: 42px; padding: 0 7px 0 17px; }
.tabs { display: flex; gap: 33px; align-items: flex-start; padding-top: 14px; }
.tabs a { padding-bottom: 6px; border-bottom: 4px solid transparent; }
.tabs .on { font-weight: 700; border-color: #0a63c9; color: #333; }
.search { display: flex; align-items: center; align-self: flex-start; height: 25px; margin-top: 6px; }
.combo { display: flex; width: 153px; height: 25px; border: 1px solid #c3c3c3; background: #fff; color: #777; }
.combo input { flex: 1; min-width: 0; border: 0; padding: 0 4px; background: none; font: inherit; outline: 0; }
.combo input::placeholder { color: #f8f8f8; opacity: 1; }
.combo button { display: flex; align-items: center; width: 12px; }
.find { display: flex; align-items: center; gap: 3px; margin-left: 3px; }
.ssep { width: 1px; height: 15px; margin: 0 5px 0 7px; background: #ccc; }
.help { width: 20px; height: 20px; border: 1px solid #555; background: #f5f5f5; color: #2b579a; font-size: 16px; font-weight: 700; line-height: 18px; }

.ribbon { display: flex; height: 108px; padding-left: 1px; }
.group { display: flex; flex-direction: column; border-right: 1px solid #d5d5d5; text-align: center; }
.items { display: flex; justify-content: center; height: 86px; padding-left: 2px; }
.group h2 { line-height: 22px; color: #666; }
.g1 { width: 295px; } .g2 { width: 291px; } .g3 { width: 189px; } .g4 { width: 205px; }
.g5 { width: 62px; } .g6 { width: 145px; } .g7 { width: 202px; } .g8 { width: 82px; }
.g5 .items, .g6 .items, .g7 .items { padding-left: 0; }
.foot { display: flex; align-items: center; }
.foot h2 { flex: 1; }
.launch { width: 10px; margin-right: 7px; }
.rb { display: flex; flex-direction: column; align-items: center; padding-top: 9px; white-space: nowrap; }
.rb svg { height: 32px; margin-bottom: 10px; }
.rb > .caret { margin-top: 6px; }
.rb span .caret { vertical-align: 4px; }
.off { opacity: .5; }
.w52 { width: 52px; } .w54 { width: 54px; } .w56 { width: 56px; } .w58 { width: 58px; } .w60 { width: 60px; }
.w64 { width: 64px; } .w66 { width: 66px; } .w68 { width: 68px; } .w70 { width: 70px; } .w78 { width: 78px; }
.w84 { width: 84px; } .w100 { width: 100px; } .w108 { width: 108px; }

.work { display: flex; flex: 1; margin-top: 3px; padding-left: 2px; border-top: 1px solid #d5d5d5; }
.doc { display: flex; flex: 1; flex-direction: column; border-right: 2px solid #aaa; }
.frame { display: flex; flex: 1; flex-direction: column; margin-top: 1px; padding-top: 1px; border: 1px solid #aaa; border-right: 0; }
.view { display: flex; flex: 1; margin-left: 1px; padding-right: 4px; border-left: 2px solid #777; border-top: 1px solid #606060; background: #fff; }
.canvas { position: relative; display: flex; flex: 1; justify-content: center; padding-top: 319px; }
.vbar { display: flex; flex-direction: column; align-items: center; width: 19px; padding: 5px 0 6px; background: #efefef; }
.vtrack { flex: 1; align-self: stretch; padding-top: 297px; }
.vthumb { height: 94px; background: #cdcdcd; }
.hbar { display: flex; align-items: center; height: 22px; margin-left: 1px; padding: 0 29px 0 4px; border-left: 2px solid #777; border-bottom: 1px solid #fff; background: #efefef; }
.htrack { display: flex; flex: 1; align-self: stretch; justify-content: center; }
.hthumb { width: 496px; height: 19px; background: #cdcdcd; }
.corner { position: absolute; right: 1px; bottom: 1px; width: 21px; height: 21px; border: 1px solid #aaa; background: #c5ccd3; display: grid; place-content: center; }

.map { position: relative; width: 490px; height: 400px; }
.links { position: absolute; left: 0; top: 0; }
.root { position: absolute; left: 159px; top: 0; width: 172px; height: 155px; padding: 1px; border: 2px solid #409cff; border-top-width: 5px; border-radius: 4px; background: #fff; }
.rootbox { display: flex; flex-direction: column; align-items: center; height: 147px; padding-top: 17px; border: 2px solid #333; border-radius: 6px; }
.rootbox strong { margin-top: 9px; font-size: 22px; line-height: 31px; color: #1c1c1c; text-align: center; }
.plus { position: absolute; left: 234px; top: 154px; }
.node { position: absolute; top: 216px; display: flex; flex-direction: column; align-items: center; padding-top: 7px; border: 3px solid; border-radius: 8px; background: #fff; }
.node strong { margin-top: 10px; font-size: 20px; line-height: 26px; color: #10242c; }
.ordre { left: 0; width: 136px; height: 133px; border-color: #4448c8; }
.danger { left: 162px; width: 142px; height: 129px; border-color: #b01212; }
.indic { left: 331px; width: 159px; height: 142px; border-color: #55d463; }
.sign { fill: #fff; filter: drop-shadow(2px 3px 2px #8888); }
.pill { position: absolute; width: 21px; height: 12px; border: 1px solid; border-radius: 6px; background: #fff; font-size: 9px; line-height: 10px; }
.pill span { color: #222; }
.pill.p1 { left: 57px; top: 369px; border-color: #4448c8; }
.pill.p2 { left: 222px; top: 365px; border-color: #b01212; }
.pill.p3 { left: 400px; top: 378px; border-color: #55d463; }

.doctabs { display: flex; align-items: flex-start; height: 27px; background: #e5e5e5; }
.nav { align-self: center; width: 8px; margin: 0 6px 0 4px; }
.nav.end { margin: 0 10px 0 auto; }
.dtab { display: flex; align-items: center; height: 25px; padding-right: 8px; border-right: 1px solid #a8a8a8; border-bottom: 1px solid #a8a8a8; background: linear-gradient(#fff, #fff) 25px 0 no-repeat; color: #0a63c9; font-weight: 700; }
.slant { margin-right: 11px; align-self: flex-start; }
.dtab a { margin: 0 14px; }
.tico { margin-right: 13px; }
.tico:last-child { margin-right: 0; }

.side { width: 39px; padding-top: 18px; }
.side button { display: flex; align-items: center; width: 36px; height: 38px; padding-left: 7px; border: solid #aaa; border-width: 1px 1px 0 0; border-top-right-radius: 6px; background: #e6e6e6; }
.side button:last-child { height: 39px; border-bottom-width: 1px; }
.side svg { width: 20px; height: 20px; }

.status { display: flex; align-items: center; justify-content: flex-end; height: 28px; margin-left: 2px; padding-right: 6px; border-top: 1px solid #c8c8c8; }
.status .caret { margin-left: 4px; }
.sb { width: 20px; }
.sb svg { width: 20px; height: 20px; }
.g10 { margin-left: 8px; }
.g15 { margin-left: 16px; }
.g8s { margin-left: 8px; }
.g10s { margin-left: 10px; }
.pale { margin-left: 7px; opacity: .4; }
.cal { font: 700 9px "Open Sans", sans-serif; fill: #555; }
.zoom { margin: 0 26px 0 13px; }
.range { appearance: none; width: 106px; height: 20px; margin: 0 14px; background: linear-gradient(#aaa, #aaa) center / 100% 1px no-repeat; }
.range::-webkit-slider-thumb { appearance: none; width: 6px; height: 20px; border: 1px solid #999; background: #eee; }
.fit { margin-left: 10px; }
.fit + .fit { margin-left: 16px; }
.grip { margin-left: 11px; align-self: flex-end; margin-bottom: 4px; }
```
